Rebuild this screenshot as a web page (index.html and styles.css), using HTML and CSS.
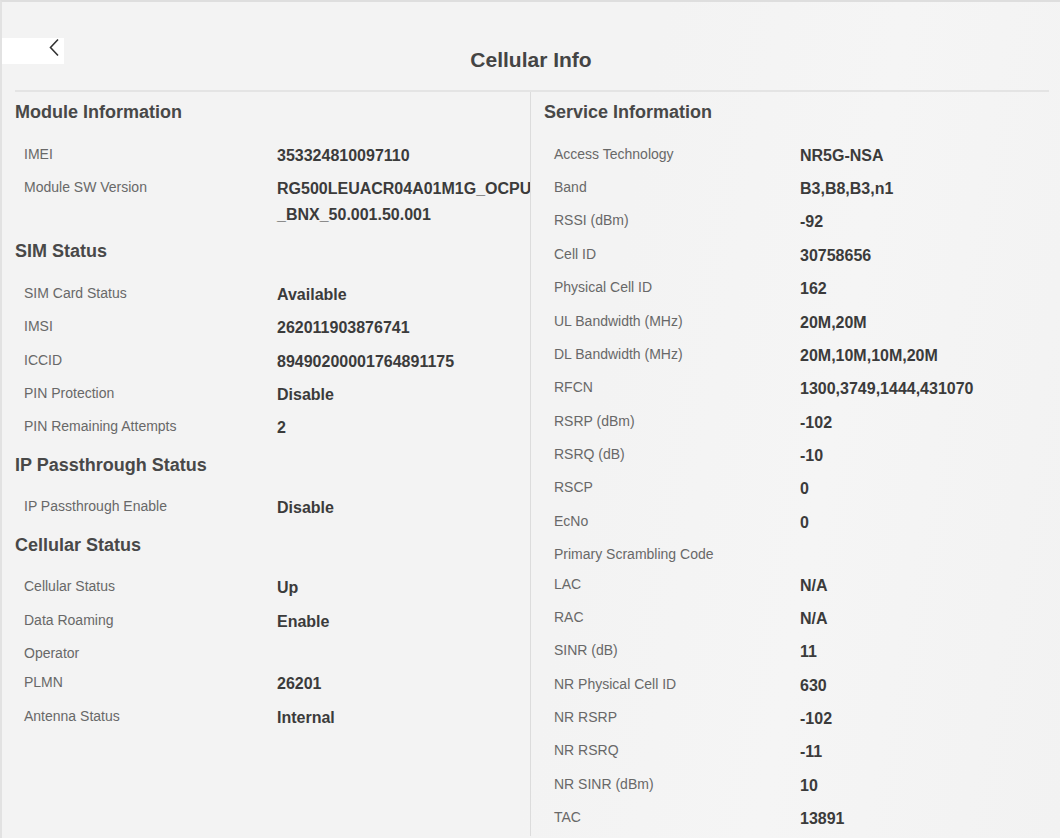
FILE: index.html
```html
<!DOCTYPE html>
<html lang="en">
<head>
  <meta charset="UTF-8">
  <meta name="viewport" content="width=device-width, initial-scale=1.0">
  <title>Cellular Info</title>
  <link rel="stylesheet" href="styles.css">
</head>
<body>
  <main class="page">
    <header class="header">
      <a href="#" class="back">
        <svg width="12" height="19" viewBox="0 0 12 19"><path d="M10 1.5 L2.5 9.5 L10 17.5" fill="none" stroke="#333" stroke-width="1.6"/></svg>
      </a>
      <h1>Cellular Info</h1>
    </header>

    <div class="columns">
      <section class="col col-left">
        <h2>Module Information</h2>
        <div class="row"><span class="label">IMEI</span><span class="value">353324810097110</span></div>
        <div class="row"><span class="label">Module SW Version</span><span class="value">RG500LEUACR04A01M1G_OCPU<wbr>_BNX_50.001.50.001</span></div>

        <h2>SIM Status</h2>
        <div class="row"><span class="label">SIM Card Status</span><span class="value">Available</span></div>
        <div class="row"><span class="label">IMSI</span><span class="value">262011903876741</span></div>
        <div class="row"><span class="label">ICCID</span><span class="value">89490200001764891175</span></div>
        <div class="row"><span class="label">PIN Protection</span><span class="value">Disable</span></div>
        <div class="row"><span class="label">PIN Remaining Attempts</span><span class="value">2</span></div>

        <h2>IP Passthrough Status</h2>
        <div class="row"><span class="label">IP Passthrough Enable</span><span class="value">Disable</span></div>

        <h2>Cellular Status</h2>
        <div class="row"><span class="label">Cellular Status</span><span class="value">Up</span></div>
        <div class="row"><span class="label">Data Roaming</span><span class="value">Enable</span></div>
        <div class="row"><span class="label">Operator</span><span class="value"></span></div>
        <div class="row"><span class="label">PLMN</span><span class="value">26201</span></div>
        <div class="row"><span class="label">Antenna Status</span><span class="value">Internal</span></div>
      </section>

      <section class="col col-right">
        <h2>Service Information</h2>
        <div class="row"><span class="label">Access Technology</span><span class="value">NR5G-NSA</span></div>
        <div class="row"><span class="label">Band</span><span class="value">B3,B8,B3,n1</span></div>
        <div class="row"><span class="label">RSSI (dBm)</span><span class="value">-92</span></div>
        <div class="row"><span class="label">Cell ID</span><span class="value">30758656</span></div>
        <div class="row"><span class="label">Physical Cell ID</span><span class="value">162</span></div>
        <div class="row"><span class="label">UL Bandwidth (MHz)</span><span class="value">20M,20M</span></div>
        <div class="row"><span class="label">DL Bandwidth (MHz)</span><span class="value">20M,10M,10M,20M</span></div>
        <div class="row"><span class="label">RFCN</span><span class="value">1300,3749,1444,431070</span></div>
        <div class="row"><span class="label">RSRP (dBm)</span><span class="value">-102</span></div>
        <div class="row"><span class="label">RSRQ (dB)</span><span class="value">-10</span></div>
        <div class="row"><span class="label">RSCP</span><span class="value">0</span></div>
        <div class="row"><span class="label">EcNo</span><span class="value">0</span></div>
        <div class="row"><span class="label">Primary Scrambling Code</span><span class="value"></span></div>
        <div class="row"><span class="label">LAC</span><span class="value">N/A</span></div>
        <div class="row"><span class="label">RAC</span><span class="value">N/A</span></div>
        <div class="row"><span class="label">SINR (dB)</span><span class="value">11</span></div>
        <div class="row"><span class="label">NR Physical Cell ID</span><span class="value">630</span></div>
        <div class="row"><span class="label">NR RSRP</span><span class="value">-102</span></div>
        <div class="row"><span class="label">NR RSRQ</span><span class="value">-11</span></div>
        <div class="row"><span class="label">NR SINR (dBm)</span><span class="value">10</span></div>
        <div class="row"><span class="label">TAC</span><span class="value">13891</span></div>
      </section>
    </div>
  </main>
</body>
</html>
```

FILE: styles.css
```css
html, body {
  margin: 0;
  height: 100%;
}
body {
  font-family: "Liberation Sans", Arial, sans-serif;
  background: #f2f2f2;
  overflow: hidden;
}
.page {
  min-height: 100vh;
  box-sizing: border-box;
  border-top: 2px solid #dedede;
  border-left: 2px solid #e2e2e2;
  background: linear-gradient(100deg, #f3f3f3 0%, #f3f3f3 55%, #f5f5f5 75%, #f2f2f2 100%);
}

.header {
  position: relative;
  padding-top: 46px;
  padding-bottom: 18px;
}
.back {
  position: absolute;
  top: 36px;
  left: 0;
  width: 62px;
  height: 26px;
  background: #fff;
  display: flex;
  justify-content: flex-end;
  align-items: flex-start;
  padding-right: 4px;
  box-sizing: border-box;
}
.back svg {
  display: block;
}
h1 {
  margin: 0;
  text-align: center;
  font-size: 21px;
  line-height: 24px;
  font-weight: bold;
  color: #444;
}

.columns {
  display: grid;
  grid-template-columns: 515px 1fr;
  margin: 0 11px 0 13px;
  border-top: 2px solid #e4e4e4;
  min-height: 744px;
}
.col-right {
  border-left: 1px solid #dcdcdc;
  padding-left: 13px;
}

h2 {
  margin: 8.5px 0 16px;
  font-size: 18px;
  line-height: 22px;
  font-weight: bold;
  color: #484848;
}
.col > h2:first-child {
  margin-top: 9px;
}

.row {
  display: grid;
  grid-template-columns: 253px 1fr;
  align-items: start;
  padding: 3.7px 0 3.7px 9px;
}
.col-right .row {
  grid-template-columns: 246px 1fr;
  padding-left: 10px;
}
.label {
  font-size: 14px;
  line-height: 22px;
  color: #686868;
}
.value {
  font-size: 16px;
  line-height: 26px;
  font-weight: bold;
  color: #3b3b3b;
}
```
